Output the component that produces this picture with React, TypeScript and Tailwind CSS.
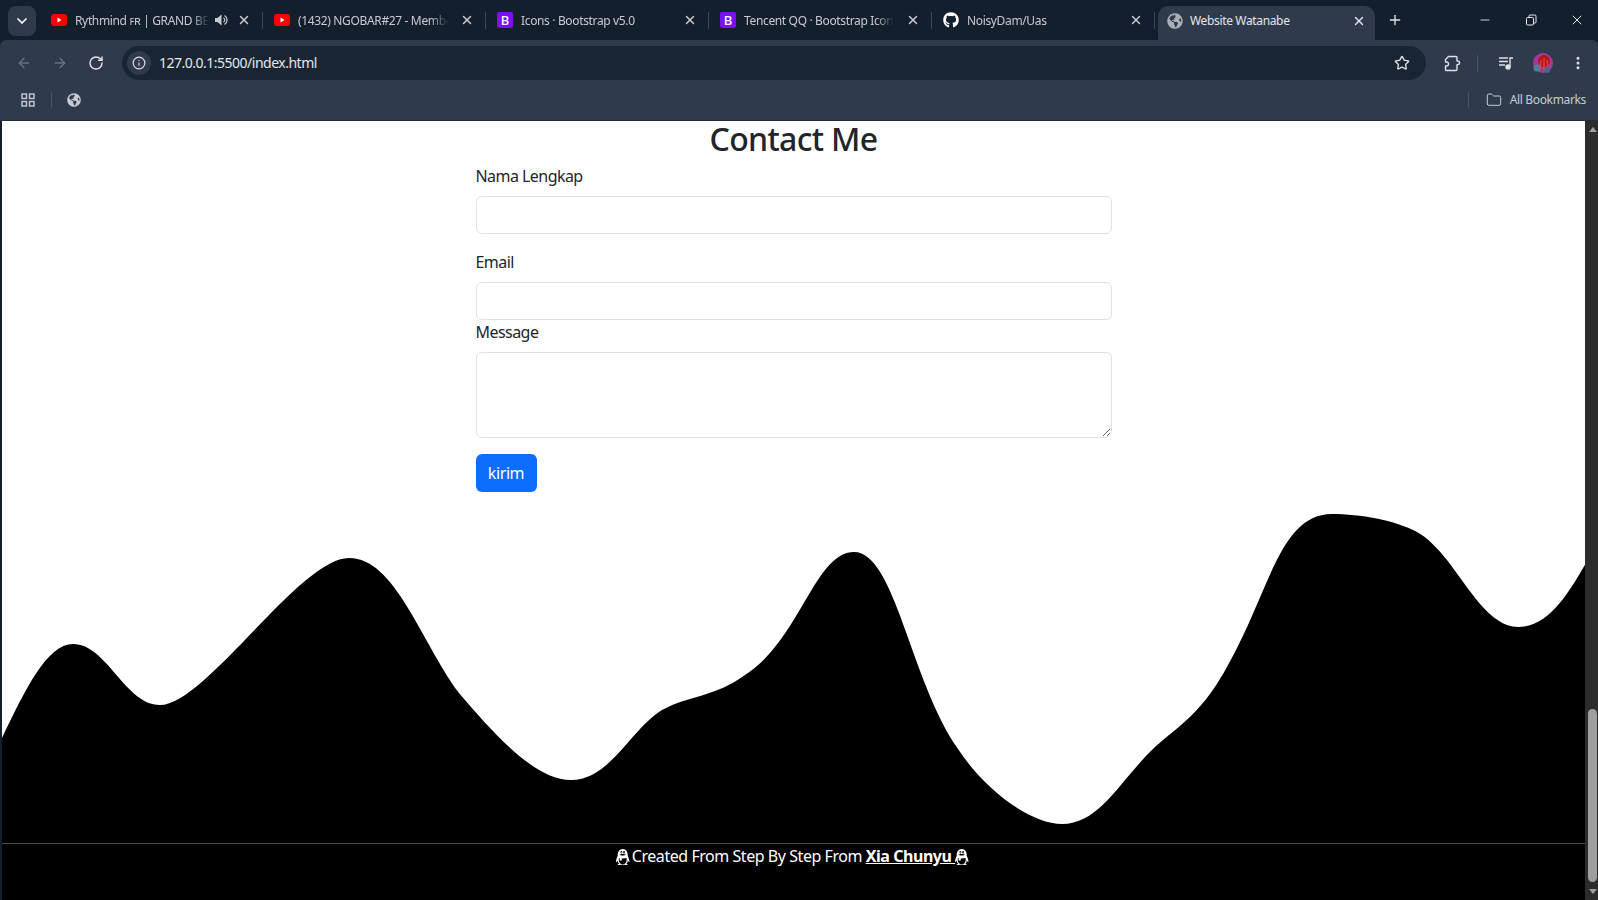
import {
  ArrowLeft,
  ArrowRight,
  ChevronDown,
  EllipsisVertical,
  Folder,
  Info,
  Minus,
  Plus,
  RotateCw,
  Star,
  X,
} from "lucide-react";
import { BsTencentQq } from "react-icons/bs";
import { FaGithub, FaGlobeAmericas } from "react-icons/fa";

function YoutubeIcon() {
  return (
    <svg viewBox="0 0 16 12" className="w-4 h-3 shrink-0">
      <rect width="16" height="12" rx="3" fill="#ff0000" />
      <path d="M6.5 3.6 L10.5 6 L6.5 8.4 Z" fill="#ffffff" />
    </svg>
  );
}

function BootstrapIcon() {
  return (
    <div className="w-4 h-4 shrink-0 rounded-[2px] bg-[#7e0ff0] text-white text-[13px] leading-4 text-center font-medium">
      B
    </div>
  );
}

function SpeakerIcon() {
  return (
    <svg viewBox="0 0 14 14" className="w-3.5 h-3.5 ml-[5px] shrink-0 text-[#c6cbd2]" fill="none">
      <path d="M1 5 H3.5 L7.5 1.5 V12.5 L3.5 9 H1 Z" fill="currentColor" />
      <path d="M9.5 4.8 a2.6 2.6 0 0 1 0 4.4 M10.5 2.5 a5.2 5.2 0 0 1 0 9" stroke="currentColor" strokeWidth="1.2" />
    </svg>
  );
}

const tabs = [
  { title: "Rythmind ꜰʀ | GRAND BEAT", icon: <YoutubeIcon />, sound: true },
  { title: "(1432) NGOBAR#27 - Member", icon: <YoutubeIcon />, sound: false },
  { title: "Icons · Bootstrap v5.0", icon: <BootstrapIcon />, sound: false },
  { title: "Tencent QQ · Bootstrap Icons", icon: <BootstrapIcon />, sound: false },
  { title: "NoisyDam/Uas", icon: <FaGithub className="w-4 h-4 shrink-0 text-white" />, sound: false },
];

function BrowserChrome() {
  return (
    <div className="shrink-0 text-[#e3e6ea]">
      {/* Tab strip */}
      <div className="h-10 flex items-start bg-[#141f2e]">
        <div className="w-10 h-10 shrink-0 pt-1.5 pl-2">
          <div className="w-7 h-[30px] rounded-lg bg-[#2f3b4c] flex items-center justify-center">
            <ChevronDown className="w-4 h-4 text-white" strokeWidth={2.5} />
          </div>
        </div>
        {tabs.map((tab) => (
          <div key={tab.title} className="w-[223px] h-10 shrink-0 pl-[11px] flex items-center">
            {tab.icon}
            <span className="ml-2 mt-px flex-1 min-w-0 overflow-hidden whitespace-nowrap text-xs tracking-[-0.35px] text-[#c6cbd2] [mask-image:linear-gradient(to_right,black_88%,transparent)]">
              {tab.title}
            </span>
            {tab.sound && <SpeakerIcon />}
            <X className={`w-3.5 h-3.5 shrink-0 text-[#c6cbd2] ${tab.sound ? "ml-[9px]" : "ml-3"}`} strokeWidth={2.5} />
            <div className="w-px h-[17px] ml-[11px] shrink-0 bg-[#3a4656]" />
          </div>
        ))}
        <div className="w-[217px] h-[34px] shrink-0 mt-1.5 ml-[3px] pl-[9px] pr-[9px] pb-1 flex items-center bg-[#2f3b4c] rounded-t-[10px]">
          <FaGlobeAmericas className="w-4 h-4 shrink-0 text-[#a9afb7]" />
          <span className="ml-[7px] flex-1 text-xs tracking-[-0.35px] text-[#e3e6ea]">Website Watanabe</span>
          <X className="w-3.5 h-3.5 shrink-0 text-[#e3e6ea]" strokeWidth={2.5} />
        </div>
        <div className="h-10 flex items-center pl-3">
          <Plus className="w-4 h-4 text-[#e3e6ea]" strokeWidth={2} />
        </div>
        <div className="flex-1 h-10 flex items-center justify-end pr-[13px]">
          <Minus className="w-3.5 h-3.5 mr-[33px] text-[#e3e6ea]" strokeWidth={1.5} />
          <svg viewBox="0 0 12 12" className="w-3 h-3 mr-8 text-[#e3e6ea]" fill="none" stroke="currentColor">
            <rect x="1.5" y="3.5" width="7" height="7.5" rx="1" />
            <path d="M4 3.5 V2 a1 1 0 0 1 1-1 h5 a1 1 0 0 1 1 1 v6 a1 1 0 0 1-1 1 H8.5" />
          </svg>
          <X className="w-4 h-4 text-[#e3e6ea]" strokeWidth={1.5} />
        </div>
      </div>

      {/* Toolbar */}
      <div className="h-10 pt-1.5 flex items-start bg-[#2f3b4c] rounded-tl-md rounded-tr-md">
        <div className="w-[122px] h-[34px] shrink-0 pl-4 flex items-center gap-5">
          <ArrowLeft className="w-4 h-4 text-[#68727f]" />
          <ArrowRight className="w-4 h-4 text-[#68727f]" />
          <RotateCw className="w-4 h-4 text-[#dfe2e6]" strokeWidth={2.2} />
        </div>
        <div className="w-[1304px] h-[34px] shrink-0 rounded-full bg-[#1a2534] flex items-center pl-[5px] pr-4">
          <div className="w-6 h-6 rounded-full bg-[#2f3b4c] flex items-center justify-center">
            <Info className="w-3.5 h-3.5 text-[#dfe2e6]" />
          </div>
          <span className="ml-2 flex-1 text-sm leading-none tracking-[-0.5px] text-[#e3e6ea]">127.0.0.1:5500/index.html</span>
          <Star className="w-4 h-4 text-[#dfe2e6]" strokeWidth={2} />
        </div>
        <div className="flex-1 h-[34px] flex items-center pl-[18px] pr-[15px]">
          <svg viewBox="0 0 17 17" className="w-[17px] h-[17px] shrink-0 text-[#dfe2e6]" fill="none" stroke="currentColor" strokeWidth="1.4" strokeLinejoin="round">
            <path d="M4.5 1.5 H12 a1 1 0 0 1 1 1 V6 h0.7 a1.8 1.8 0 0 1 0 3.6 H13 V14.5 a1 1 0 0 1-1 1 H2.5 a1 1 0 0 1-1-1 V11 H2.5 a2 2 0 0 0 0-4 H1.5 V4.5 Z" />
          </svg>
          <div className="w-px h-[17px] ml-4 bg-[#4a5564]" />
          <svg viewBox="0 0 16 14" className="w-4 h-3.5 ml-5 shrink-0 text-[#dfe2e6]" fill="none" stroke="currentColor" strokeWidth="1.4">
            <path d="M1 2 H10 M1 5.5 H10 M1 9 H7" />
            <path d="M12 11 V2 H15" />
            <circle cx="10" cy="11" r="2" fill="currentColor" />
          </svg>
          <svg viewBox="0 0 20 20" className="w-5 h-5 ml-[19px] shrink-0">
            <circle cx="10" cy="10" r="10" fill="#a43a98" />
            <circle cx="11" cy="8" r="6" fill="#b3171e" />
            <circle cx="4" cy="15" r="3.5" fill="#4f8098" />
            <circle cx="14" cy="17" r="3" fill="#3f6c84" />
            <path d="M11 5 V17 M8 7 L7 16 M14 7 L15 14" stroke="#e9453f" strokeWidth="1.2" />
          </svg>
          <EllipsisVertical className="w-4 h-4 ml-[17px] text-[#dfe2e6]" strokeWidth={2.5} />
        </div>
      </div>

      {/* Bookmarks bar */}
      <div className="h-10 flex items-center bg-[#2f3b4c] border-b border-[#242e3b] box-content">
        <div className="pl-[21px] flex items-center">
          <svg viewBox="0 0 14 14" className="w-3.5 h-3.5 text-[#c6cbd2]" fill="none" stroke="currentColor" strokeWidth="1.4">
            <rect x="1" y="1" width="4.5" height="4.5" />
            <rect x="8.5" y="1" width="4.5" height="4.5" />
            <rect x="1" y="8.5" width="4.5" height="4.5" />
            <rect x="8.5" y="8.5" width="4.5" height="4.5" />
          </svg>
          <div className="w-px h-4 ml-[16px] bg-[#4a5564]" />
          <FaGlobeAmericas className="w-3.5 h-3.5 ml-[15px] text-[#c6cbd2]" />
        </div>
        <div className="ml-auto pr-3 flex items-center">
          <div className="w-px h-4 bg-[#4a5564]" />
          <Folder className="w-4 h-4 ml-[17px] text-[#c6cbd2]" strokeWidth={1.5} />
          <span className="ml-2 text-xs tracking-[-0.35px] text-[#c6cbd2]">All Bookmarks</span>
        </div>
      </div>
    </div>
  );
}

function ContactForm() {
  return (
    <div className="w-[636px] shrink-0 mx-auto text-[#212529] tracking-[-0.55px]">
      <h2 className="h-[43px] text-[32px] leading-[36px] font-medium text-center tracking-[-0.65px]">Contact Me</h2>
      <label className="block h-6 mb-2 text-base leading-6">Nama Lengkap</label>
      <input className="block w-full h-[38px] mb-4 rounded-md border border-[#dee2e6] bg-white" />
      <label className="block h-6 mb-2 text-base leading-6">Email</label>
      <input className="block w-full h-[38px] rounded-md border border-[#dee2e6] bg-white" />
      <label className="block h-6 mb-2 text-base leading-6">Message</label>
      <textarea className="block w-full h-[86px] mb-4 rounded-md border border-[#dee2e6] bg-white" />
      <button className="block w-[61px] h-[38px] rounded-md bg-[#0d6efd] text-white text-base tracking-[-0.4px]">kirim</button>
    </div>
  );
}

function Wave() {
  return (
    <svg viewBox="2 510 1583 333" className="block w-full h-[333px] mt-[18px] shrink-0">
      <path
        fill="#000000"
        d="M2 738 C25 690 47 644 73 644 C107 644 125 705 160 705 C205 705 300 558 349 558 C395 558 420 640 459 693 C495 735 535 780 571 780 C610 780 630 730 662 710 C690 695 715 697 745 675 C800 640 815 552 854 552 C895 552 910 680 958 749 C985 790 1030 824 1062 824 C1100 824 1120 780 1155 747 C1180 725 1203 712 1228 665 C1270 590 1280 514 1332 514 C1360 514 1395 520 1417 532 C1428 538 1438 549 1447 560 C1468 587 1490 627 1518 627 C1550 627 1570 590 1586 563 L1586 843 L2 843 Z"
      />
    </svg>
  );
}

function Footer() {
  return (
    <footer className="flex-1 bg-black border-t border-[#4a4a4a] text-white text-base leading-6 tracking-[-0.45px] text-center">
      <BsTencentQq className="inline w-4 h-4 mb-[2px]" />
      Created From Step By Step From{" "}
      <a className="font-bold underline">
        Xia Chunyu <BsTencentQq className="inline w-4 h-4 mb-[2px] font-normal" />
      </a>
    </footer>
  );
}

function Scrollbar() {
  return (
    <div className="w-[13px] shrink-0 bg-[#2c2c2c] flex flex-col pl-[3px] pr-px">
      <div className="h-[16px] flex items-center justify-center">
        <div className="border-x-[4px] border-x-transparent border-b-[5px] border-b-[#9f9f9f]" />
      </div>
      <div className="flex-1" />
      <div className="h-[173px] rounded-full bg-[#9f9f9f]" />
      <div className="h-[18px] flex items-center justify-center">
        <div className="border-x-[4px] border-x-transparent border-t-[5px] border-t-[#9f9f9f]" />
      </div>
    </div>
  );
}

export default function App() {
  return (
    <div className="w-[1598px] h-[900px] overflow-hidden flex flex-col bg-[#141f2e] font-['Noto_Sans',sans-serif]">
      <BrowserChrome />
      <div className="flex-1 min-h-0 flex pl-[2px]">
        <main className="flex-1 min-w-0 flex flex-col bg-white">
          <ContactForm />
          <Wave />
          <Footer />
        </main>
        <Scrollbar />
      </div>
    </div>
  );
}
